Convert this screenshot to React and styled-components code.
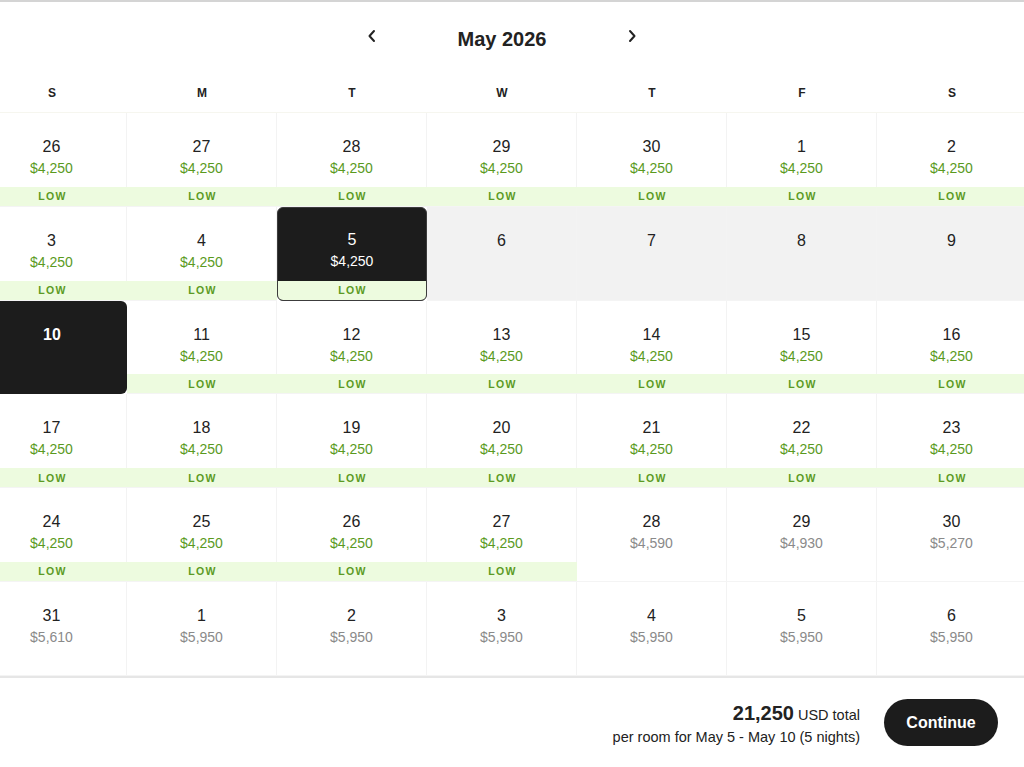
import React from "react";
import styled, { createGlobalStyle, css } from "styled-components";

const Global = createGlobalStyle`
  html, body { margin: 0; padding: 0; background: #fff; overflow: hidden; }
  body { font-family: "Liberation Sans", Arial, sans-serif; color: #222; }
  #root { width: 1024px; height: 767px; overflow: hidden; }
`;

const Page = styled.div`
  width: 1050px;
  margin-left: -23px;
  height: 767px;
  display: flex;
  flex-direction: column;
  border-top: 2px solid #d4d4d4;
  box-sizing: border-box;
`;

const Header = styled.div`
  height: 68px;
  box-sizing: border-box;
  padding-top: 6px;
  display: flex;
  align-items: center;
  justify-content: center;
`;

const NavButton = styled.button`
  width: 40px;
  height: 40px;
  border: none;
  background: transparent;
  display: flex;
  align-items: center;
  justify-content: center;
  color: #222;
  padding: 0;
  margin-top: -6px;
  cursor: pointer;
`;

const Title = styled.h2`
  margin: 0;
  width: 220px;
  text-align: center;
  font-size: 20px;
  font-weight: 600;
  color: #222;
`;

const Weekdays = styled.div`
  display: grid;
  grid-template-columns: repeat(7, 150px);
  height: 42px;
  align-items: center;
  border-bottom: 1px solid #f6f6ef;
`;

const Weekday = styled.div`
  text-align: center;
  font-size: 12px;
  font-weight: 700;
  color: #222;
  padding-top: 4px;
`;

const Grid = styled.div`
  display: grid;
  grid-template-columns: repeat(7, 150px);
  grid-auto-rows: 93.8px;
`;

const Cell = styled.div`
  display: flex;
  flex-direction: column;
  box-sizing: border-box;
  position: relative;
  border-bottom: 1px solid #f4f4f4;
  ${(p) =>
    p.$range &&
    css`
      background: #f2f2f2;
    `}
  ${(p) =>
    p.$selected &&
    css`
      background: #1c1c1c;
      border: 1.5px solid #3c3c3c;
      border-radius: 6px;
      overflow: hidden;
    `}
  ${(p) =>
    p.$end &&
    css`
      background: #1c1c1c;
      border-radius: 6px;
      border-bottom: none;
    `}
`;

const CellTop = styled.div`
  flex: 1;
  display: flex;
  flex-direction: column;
  align-items: center;
  padding-top: ${(p) => (p.$selected ? "22.5px" : "24px")};
  gap: 1px;
  border-right: ${(p) => (p.$noline ? "none" : "1px solid #f3f3f3")};
`;

const DayNum = styled.div`
  font-size: 16px;
  line-height: 20px;
  font-weight: ${(p) => (p.$bold ? 700 : 500)};
  color: ${(p) => (p.$light ? "#fff" : "#222")};
`;

const Price = styled.div`
  font-size: 14px;
  line-height: 20px;
  color: ${(p) => (p.$light ? "#fff" : p.$low ? "#5a9a1e" : "#8a8a8a")};
`;

const Band = styled.div`
  height: 19px;
  background: #edfbdf;
  color: #5b9a24;
  font-size: 10.5px;
  font-weight: 700;
  letter-spacing: 1.4px;
  display: flex;
  align-items: center;
  justify-content: center;
  padding-left: 1px;
`;

const Footer = styled.div`
  flex: 1;
  border-top: 2px solid #e6e6e6;
  display: flex;
  align-items: center;
  justify-content: flex-end;
  gap: 24px;
  padding-right: 29px;
`;

const Summary = styled.div`
  display: flex;
  flex-direction: column;
  align-items: flex-end;
  gap: 4px;
  margin-top: 2px;
`;

const TotalLine = styled.div`
  display: flex;
  align-items: baseline;
  gap: 4px;
`;

const Amount = styled.span`
  font-size: 20px;
  font-weight: 700;
  color: #222;
`;

const Unit = styled.span`
  font-size: 14.5px;
  color: #222;
`;

const Detail = styled.div`
  font-size: 14.5px;
  color: #222;
`;

const ContinueButton = styled.button`
  width: 114px;
  height: 47px;
  border-radius: 24px;
  border: none;
  background: #1c1c1c;
  color: #fff;
  font-family: inherit;
  font-size: 16px;
  font-weight: 600;
  cursor: pointer;
  margin-top: 1px;
`;

const Chevron = ({ dir }) => (
  <svg width="12" height="14" viewBox="0 0 12 14" fill="none">
    <path
      d={dir === "left" ? "M8 2 L3.5 7 L8 12" : "M4 2 L8.5 7 L4 12"}
      stroke="#222"
      strokeWidth="2"
      strokeLinecap="round"
      strokeLinejoin="round"
    />
  </svg>
);

const days = [];
const pushRange = (nums, price, low) =>
  nums.forEach((n) => days.push({ n, price, low }));

pushRange([26, 27, 28, 29, 30, 1, 2], "$4,250", true);
pushRange([3, 4], "$4,250", true);
days.push({ n: 5, price: "$4,250", low: true, selected: true });
[6, 7, 8, 9].forEach((n) => days.push({ n, range: true }));
days.push({ n: 10, end: true });
pushRange([11, 12, 13, 14, 15, 16], "$4,250", true);
pushRange([17, 18, 19, 20, 21, 22, 23], "$4,250", true);
pushRange([24, 25, 26, 27], "$4,250", true);
days.push({ n: 28, price: "$4,590" });
days.push({ n: 29, price: "$4,930" });
days.push({ n: 30, price: "$5,270" });
days.push({ n: 31, price: "$5,610" });
pushRange([1, 2, 3, 4, 5, 6], "$5,950", false);

export default function App() {
  return (
    <>
      <Global />
      <Page>
        <Header>
          <NavButton aria-label="Previous month">
            <Chevron dir="left" />
          </NavButton>
          <Title>May 2026</Title>
          <NavButton aria-label="Next month">
            <Chevron dir="right" />
          </NavButton>
        </Header>
        <Weekdays>
          {["S", "M", "T", "W", "T", "F", "S"].map((d, i) => (
            <Weekday key={i}>{d}</Weekday>
          ))}
        </Weekdays>
        <Grid>
          {days.map((d, i) => {
            const dark = d.selected || d.end;
            return (
              <Cell key={i} $selected={d.selected} $end={d.end} $range={d.range}>
                <CellTop $noline={dark} $selected={d.selected}>
                  <DayNum $light={dark} $bold={d.end}>
                    {d.n}
                  </DayNum>
                  {d.price && (
                    <Price $light={d.selected} $low={d.low}>
                      {d.price}
                    </Price>
                  )}
                </CellTop>
                {d.low && <Band>LOW</Band>}
              </Cell>
            );
          })}
        </Grid>
        <Footer>
          <Summary>
            <TotalLine>
              <Amount>21,250</Amount>
              <Unit>USD total</Unit>
            </TotalLine>
            <Detail>per room for May 5 - May 10 (5 nights)</Detail>
          </Summary>
          <ContinueButton>Continue</ContinueButton>
        </Footer>
      </Page>
    </>
  );
}
